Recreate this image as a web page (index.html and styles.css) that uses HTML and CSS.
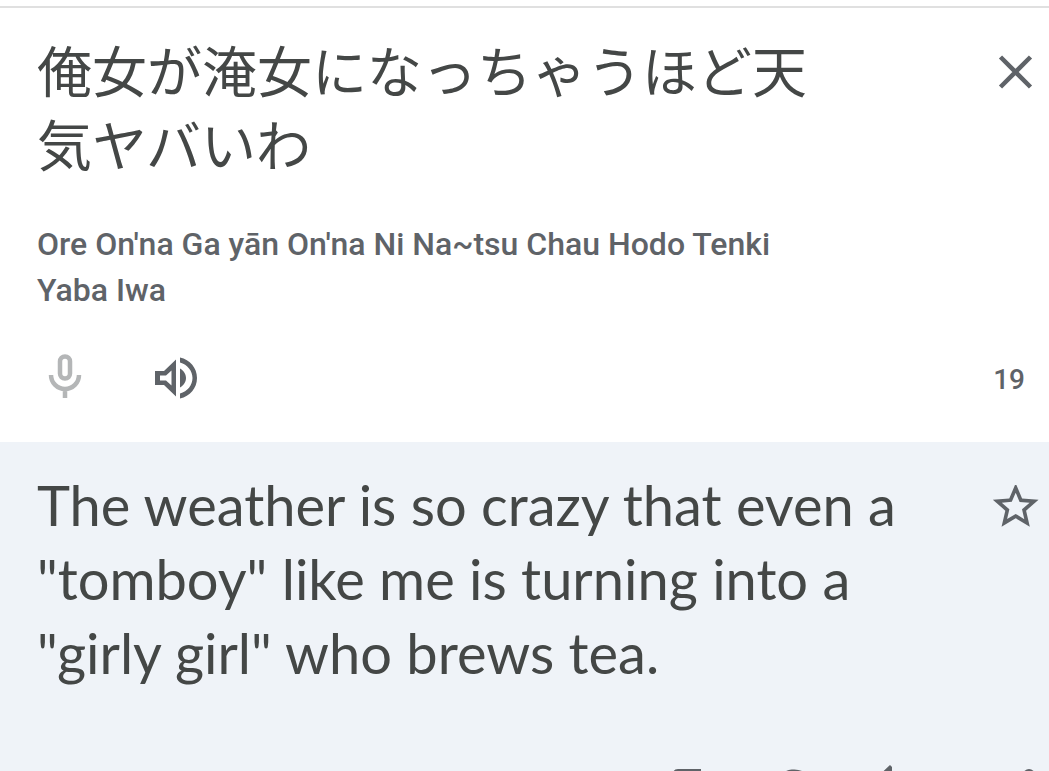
FILE: index.html
```html
<!DOCTYPE html>
<html lang="en">
<head>
<meta charset="utf-8">
<meta name="viewport" content="width=device-width, initial-scale=1">
<title>Translate</title>
<link rel="stylesheet" href="styles.css">
</head>
<body>
<main class="translator">
  <section class="source">
    <div class="row">
      <textarea class="source-text" lang="ja" rows="2" aria-label="Source text" spellcheck="false">俺女が淹女になっちゃうほど天気ヤバいわ</textarea>
      <button class="icon-button" type="button" aria-label="Clear source text">
        <svg viewBox="0 0 48 48"><path d="M9.500 9 39.500 39M39.500 9 9.500 39" fill="none" stroke="currentColor" stroke-width="4.500"/></svg>
      </button>
    </div>
    <p class="romanization">Ore On'na Ga yān On'na Ni Na~tsu Chau Hodo Tenki Yaba Iwa</p>
    <div class="source-tools">
      <button class="icon-button muted" type="button" aria-label="Translate by voice">
        <svg viewBox="0 0 48 48"><path d="M24 3.500a5 5 0 0 1 5 5v12a5 5 0 0 1-10 0v-12a5 5 0 0 1 5-5ZM10 22a14 14 0 0 0 28 0M24 36v9" fill="none" stroke="currentColor" stroke-width="4.500"/></svg>
      </button>
      <button class="icon-button" type="button" aria-label="Listen to source text">
        <svg viewBox="-1 -1 48 48"><path fill="currentColor" fill-rule="evenodd" d="M3 17h9L24 5.500v37L12 31H3ZM8 21.500v5h6l5.500 5v-15L14 21.500ZM28 14.500c3.500 2 6 5.500 6 9.500s-2.500 7.500-6 9.500ZM28 3.500c10 2 17 10.500 17 20.500s-7 18.500-17 20.500v-5c7.500-2 12.500-8.500 12.500-15.500s-5-13.500-12.500-15.500Z"/></svg>
      </button>
      <span class="count">19</span>
    </div>
  </section>
  <section class="result">
    <div class="row">
      <p class="result-text">The weather is so crazy that even a "tomboy" like me is turning into a "girly girl" who brews tea.</p>
      <button class="icon-button" type="button" aria-label="Save translation">
        <svg viewBox="1.200 2.750 21 21"><path fill="currentColor" d="m22 9.240-7.190-.620L12 2 9.190 8.630 2 9.240l5.460 4.730L5.820 21 12 17.270 18.180 21l-1.630-7.030L22 9.240ZM12 15.400l-3.760 2.270 1-4.280-3.320-2.880 4.380-.380L12 6.100l1.710 4.040 4.380.380-3.320 2.880 1 4.280L12 15.400Z"/></svg>
      </button>
    </div>
    <div class="result-tools">
      <button class="icon-button" type="button" aria-label="Copy translation">
        <svg viewBox="0 0 48 48"><path fill="none" stroke="currentColor" stroke-width="4" d="M14 34V10q0-3 3-3h23M22 16h20v27H22Z"/></svg>
      </button>
      <button class="icon-button" type="button" aria-label="Search with Google">
        <svg viewBox="0 0 48 48"><path fill="none" stroke="currentColor" stroke-width="4" d="M36 13A18 18 0 1 0 41 25H24"/></svg>
      </button>
      <button class="icon-button" type="button" aria-label="Rate this translation">
        <svg class="spill" viewBox="0 0 48 48"><path fill="currentColor" d="M-7 16 9 1l2 2v11h9v6l-6 12H-7ZM55 31 39 46l-2-2V33h-9v-6l6-12h21Z"/></svg>
      </button>
      <button class="icon-button" type="button" aria-label="Share translation">
        <svg viewBox="0 0 48 48"><path stroke="currentColor" stroke-width="4" d="M38 11 12 24l26 14"/><g fill="currentColor"><circle cx="38" cy="11" r="6"/><circle cx="12" cy="24" r="6"/><circle cx="38" cy="38" r="6"/></g></svg>
      </button>
    </div>
  </section>
</main>
</body>
</html>
```
FILE: styles.css
```css
* {
  box-sizing: border-box;
}

body {
  margin: 0;
  background: #fff;
  color: #5f6368;
  font-family: Roboto, "Liberation Sans", sans-serif;
}

.translator {
  display: flex;
  flex-direction: column;
  height: 100vh;
  padding-top: 6px;
  overflow: hidden;
}

.source {
  flex: none;
  padding: 23px 10px 41px 37px;
  border-top: 2px solid #e0e0e0;
}

.row {
  display: flex;
  align-items: flex-start;
  justify-content: space-between;
  gap: 32px;
}

.source-text {
  display: block;
  flex: 0 1 800px;
  min-width: 0;
  padding: 0;
  border: 0;
  outline: 0;
  resize: none;
  overflow: hidden;
  background: transparent;
  color: #444746;
  font: 400 55px/74px "Noto Sans CJK JP", sans-serif;
}

.icon-button {
  flex: none;
  width: 48px;
  height: 48px;
  padding: 0;
  border: 0;
  background: transparent;
  color: #5f6368;
}

.icon-button svg {
  display: block;
  width: 100%;
  height: 100%;
}

.icon-button .spill {
  overflow: visible;
}

.row .icon-button {
  margin-top: 17px;
}

.icon-button.muted {
  color: #b4b6b7;
}

.romanization {
  max-width: 800px;
  margin: 42px 0 40px;
  font-size: 32px;
  font-weight: 500;
  line-height: 46px;
}

.source-tools {
  display: flex;
  align-items: center;
  gap: 62px;
  padding: 0 14px 0 4px;
}

.count {
  margin-left: auto;
  padding-top: 5px;
  font-size: 28px;
  font-weight: 500;
}

.result {
  flex: 1 0 auto;
  padding: 26px 10px 40px 37px;
  background: #eff3f8;
}

.result-text {
  flex: 0 1 880px;
  margin: 0;
  color: #444746;
  font: 400 56px/74px Lato, sans-serif;
}

.result-tools {
  display: flex;
  justify-content: flex-end;
  gap: 62px;
  margin-top: 74px;
}
```
